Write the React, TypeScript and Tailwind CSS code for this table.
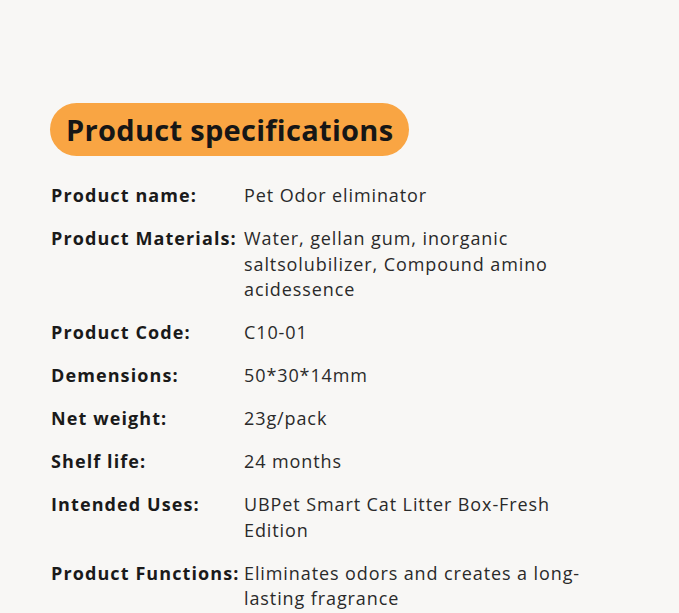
import React from "react";

const rows: { label: string; lines: string[] }[] = [
  { label: "Product name:", lines: ["Pet Odor eliminator"] },
  {
    label: "Product Materials:",
    lines: ["Water, gellan gum, inorganic", "saltsolubilizer, Compound amino", "acidessence"],
  },
  { label: "Product Code:", lines: ["C10-01"] },
  { label: "Demensions:", lines: ["50*30*14mm"] },
  { label: "Net weight:", lines: ["23g/pack"] },
  { label: "Shelf life:", lines: ["24 months"] },
  { label: "Intended Uses:", lines: ["UBPet Smart Cat Litter Box-Fresh", "Edition"] },
  { label: "Product Functions:", lines: ["Eliminates odors and creates a long-", "lasting fragrance"] },
];

export default function App() {
  return (
    <div
      className="w-[679px] h-[613px] overflow-hidden bg-[#f8f7f5] text-[#1c1c1c]"
      style={{ fontFamily: "'Open Sans', Lato, sans-serif" }}
    >
      <div className="pt-[103px] pl-[50px]">
        <div className="inline-flex items-center h-[53px] rounded-full bg-[#f9a543] px-[16px]">
          <span className="text-[29px] font-bold leading-none text-[#161616] tracking-[0.3px]">
            Product specifications
          </span>
        </div>
      </div>
      <div className="pl-[51px] pt-[27px] flex flex-col gap-[17.5px]">
        {rows.map((r) => (
          <div key={r.label} className="flex text-[18px] leading-[25.5px]">
            <div className="w-[193px] shrink-0 font-bold text-[#1a1a1a] tracking-[1.1px]">{r.label}</div>
            <div className="text-[#2a2a2a] tracking-[0.9px]">
              {r.lines.map((l) => (
                <div key={l}>{l}</div>
              ))}
            </div>
          </div>
        ))}
      </div>
    </div>
  );
}
